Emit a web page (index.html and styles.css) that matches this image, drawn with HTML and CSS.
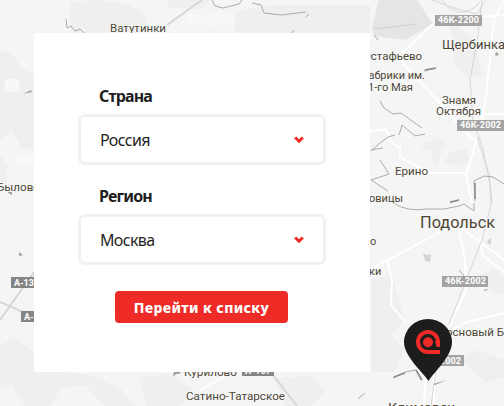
FILE: index.html
```html
<!DOCTYPE html>
<html lang="ru">
<head>
<meta charset="utf-8">
<title>Выбор региона</title>
<link rel="stylesheet" href="styles.css">
</head>
<body>
<main class="page">
  <svg class="map" viewBox="0 0 504 406" aria-hidden="true">
    <rect width="504" height="406" fill="#f5f5f5"/>
    <g fill="#efefef">
      <path d="M70 3Q95-2 115 2Q140 5 147 20L150 34H70Z"/>
      <path d="M0 50L12 54L22 68L34 75V150L22 148L12 130L0 140Z"/>
      <path d="M0 155L8 165L5 190L0 192ZM0 345L15 338L34 352V372H65L90 375L120 388L135 406H105L85 385L60 390L50 406H25L12 385L0 388Z"/>
      <path d="M167 0H210L203 9L170 8Z"/>
      <path d="M235 12L270 5H370V34H235Z"/>
      <path d="M425 142L440 138L447 145L441 150L437 165L431 160L432 150L421 148ZM450 152L466 148L469 162L457 166L444 163Z"/>
      <path d="M371 280L390 274L398 295L404 322L386 338L371 340ZM371 310L404 350L394 372H371ZM480 275L494 269L504 275V295L492 292ZM450 20L475 40L482 75L469 79L454 65ZM460 358L477 350L504 360V378L485 382Z"/>
      <path d="M140 378L168 373L194 390L180 406H146ZM275 379L310 375L325 391L311 406H285Z"/>
    </g>
    <g fill="#f8f8f8">
      <ellipse cx="12" cy="85" rx="8" ry="7"/>
      <ellipse cx="25" cy="159" rx="9" ry="6"/>
      <path d="M185 12L207 16L223 10L237 20L215 27L190 22Z"/>
    </g>
    <path d="M379 0H417L433 24L405 40L374 36L372 27Z" fill="#e5e5e5"/>
    <path d="M374 29L416 24" fill="none" stroke="#d1d1d1"/>
    <g fill="none" stroke="#fff" stroke-width="2">
      <path d="M504 0L494 20L485 105L476 142L466 175L472 203M433 24L398 57L416 78L442 105L460 126L478 144M480 114H504"/>
      <path d="M370 131L386 129L392 143L400 147V157L430 173H467M371 270L387 260L456 224L504 260M387 260L392 280L391 305L406 323M458 224L465 260L466 290L450 325M504 313L467 322L448 332M480 17L504 15M426 370L424 406M434 368V406"/>
      <path d="M200 390L230 373M480 235L482 255L504 272"/>
    </g>
    <g fill="none" stroke="#d6d6d6">
      <path d="M167 25L202 0M0 320L34 272M0 302L34 317M273 375L297 406" stroke-width="2"/>
      <path d="M432 0L457 9L477 14L486 0M442 0Q460 24 480 2M482 0L478 35L470 80L473 120L483 149L490 185L491 205L482 240L449 324M477 137L489 174L492 203M18 286L34 275M436 370L431 406"/>
    </g>
    <g fill="none" stroke="#ababa9">
      <path d="M66 19L67 28L71 26L75 31L80 29L84 33M212 0L215 6L223 8L239 4L242 0M252 3L261 5L264 13L281 15L306 12M306 17L309 14M292 33L294 30M374 35L378 40M424 71L436 68M380 101L384 108L393 114L401 113L422 128M371 151L380 143L388 137L395 135M399 135L402 125L415 136L425 134M371 150L383 148M380 160L389 174L371 180L388 191M475 201L474 181L484 176L493 177L504 184M450 203L459 200M394 203Q406 212 427 209L444 209L459 206L464 204L474 211L474 203M459 270L466 278M358 399L365 393M393 378L405 372L416 370L421 380"/>
      <path d="M416 370L422 380M394 377L405 373M475 183V199M450 202L459 200M425 70L436 68" stroke="#8b8b89" stroke-width="1.5"/>
    </g>
    <g fill="#a2a29c">
      <path d="M23 94L31 90L32 92ZM9 190L12 192V195L8 193ZM19 252L23 255L19 256ZM496 52L499 54L497 56L495 55ZM174 371H182L179 374H176L173 377Z"/>
      <path d="M423 253L427 255L431 254L430 262L425 261ZM488 240L491 238V245L487 243Z" fill="#d5d5d5"/>
      <path d="M483 290L488 289L486 291ZM433 384L447 380L435 385Z"/>
    </g>
    <g class="place">
      <text x="110" y="32" textLength="56" lengthAdjust="spacingAndGlyphs">Ватутинки</text>
      <text x="-3" y="191" textLength="43" lengthAdjust="spacingAndGlyphs">Былово</text>
      <text x="363" y="60" textLength="59" lengthAdjust="spacingAndGlyphs">Остафьево</text>
      <text x="360" y="79" textLength="65" lengthAdjust="spacingAndGlyphs">Фабрики им.</text>
      <text x="368" y="91" textLength="45" lengthAdjust="spacingAndGlyphs">1-го Мая</text>
      <text x="442" y="104" textLength="34" lengthAdjust="spacingAndGlyphs">Знамя</text>
      <text x="436" y="115" textLength="45" lengthAdjust="spacingAndGlyphs">Октября</text>
      <text x="395" y="175" textLength="33" lengthAdjust="spacingAndGlyphs">Ерино</text>
      <text x="369" y="202">овицы</text>
      <text x="370" y="245">о</text>
      <text x="369" y="275">ки</text>
      <text x="446" y="336" textLength="58" lengthAdjust="spacingAndGlyphs">основый Б</text>
      <text x="184" y="376" textLength="53" lengthAdjust="spacingAndGlyphs">Курилово</text>
      <text x="186" y="400" textLength="99" lengthAdjust="spacingAndGlyphs">Сатино-Татарское</text>
      <text class="town" x="442" y="49" textLength="63" lengthAdjust="spacingAndGlyphs">Щербинка</text>
      <text class="city" x="420" y="228" textLength="75" lengthAdjust="spacingAndGlyphs">Подольск</text>
      <text class="town" x="388" y="412" textLength="67" lengthAdjust="spacingAndGlyphs">Климовск</text>
    </g>
    <g fill="#a4a4a4">
      <path d="M435 15H482V26H435ZM457 120H504V131H457ZM442 276H488V287H442ZM417 355H464V366H417Z"/>
      <path d="M11 277H50V288H11ZM21 311H60V322H21ZM242 365H274V376H242Z" fill="#858585"/>
    </g>
    <g class="road">
      <text x="438" y="23.3" textLength="41">46К-2200</text>
      <text x="460" y="128.3" textLength="41">46К-2002</text>
      <text x="445" y="284.3" textLength="41">46К-2002</text>
      <text x="420" y="363.8" textLength="41">46К-2002</text>
      <text x="14" y="286.3">А-130</text>
      <text x="24" y="320.3">А-107</text>
      <text x="245" y="374" textLength="26">А-107</text>
    </g>
    <path d="M428.500 381C424 373 404 357 404 342A24 23 0 0 1 452 342C452 357 433 373 428.500 381Z" fill="#1d1e1c"/>
    <path d="M440 352H428A10 10 0 1 1 438 342V346" fill="none" stroke="#ee2b26" stroke-width="4"/>
    <path d="M435 341H440V347H437Z" fill="#ee2b26"/>
    <circle cx="428" cy="342.300" r="5" fill="#ee2b26"/>
  </svg>
  <form class="card">
    <div class="field">
      <span class="label">Страна</span>
      <div class="select"><span class="value">Россия</span>
        <svg class="chevron" viewBox="0 0 10 8"><path d="M1.2 1.5L5 5.2L8.8 1.5"/></svg>
      </div>
    </div>
    <div class="field">
      <span class="label">Регион</span>
      <div class="select"><span class="value">Москва</span>
        <svg class="chevron" viewBox="0 0 10 8"><path d="M1.2 1.5L5 5.2L8.8 1.5"/></svg>
      </div>
    </div>
    <button class="submit" type="button">Перейти к списку</button>
  </form>
</main>
</body>
</html>
```
FILE: styles.css
```css
* { box-sizing: border-box; }
body { margin: 0; overflow: hidden; }
.page {
  display: grid;
  width: 504px;
  height: 406px;
  overflow: hidden;
  font-family: "Noto Sans", sans-serif;
}
.map, .card { grid-area: 1 / 1; }
.map { width: 504px; height: 406px; }
.place {
  font: 11px Roboto, sans-serif;
  fill: #4c4636;
  stroke: #f8f8f8;
  stroke-width: 2px;
  paint-order: stroke;
}
.place .town { font-size: 13px; }
.place .city { font-size: 16px; }
.road { font: bold 9px Roboto, sans-serif; fill: #fff; }
.card {
  z-index: 1;
  width: 336px;
  height: 339px;
  margin: 33px 0 0 34px;
  padding: 50px 44px 0;
  background: #fff;
}
.field { height: 100px; }
.label {
  display: block;
  height: 31px;
  padding-left: 21px;
  font-size: 16px;
  font-weight: 700;
  line-height: 26px;
  letter-spacing: -.85px;
  color: #1e1e1e;
}
.select {
  display: flex;
  align-items: center;
  justify-content: space-between;
  width: 248px;
  height: 51px;
  padding: 0 19px;
  border: 3px solid #f2f2f2;
  border-radius: 7px;
}
.value { font-size: 16px; letter-spacing: -.65px; color: #242424; }
.chevron { width: 10px; height: 8px; fill: none; stroke: #ee2b26; stroke-width: 3; }
.submit {
  display: block;
  width: 173px;
  height: 32px;
  margin: 8px 0 0 37px;
  padding: 0;
  border: 0;
  border-radius: 4px;
  background: #ee2b26;
  color: #fff;
  font: 800 14px/31px "Noto Sans", sans-serif;
  letter-spacing: .4px;
}
```
